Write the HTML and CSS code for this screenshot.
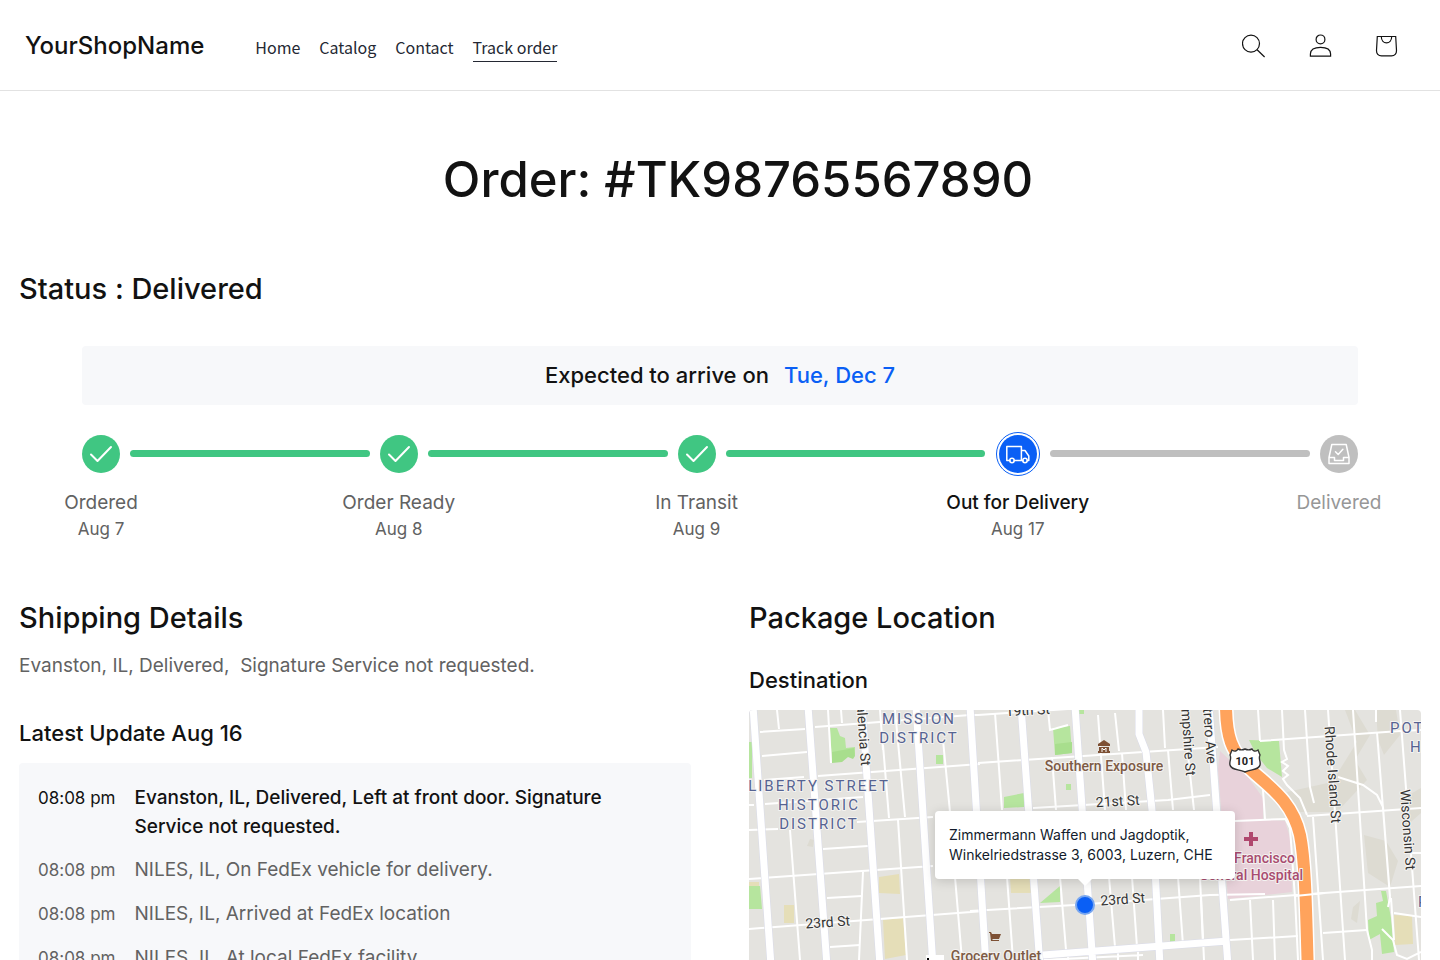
FILE: index.html
```html
<!DOCTYPE html>
<html lang="en">
<head>
<meta charset="utf-8">
<meta name="viewport" content="width=device-width, initial-scale=1">
<title>Track order</title>
<link rel="stylesheet" href="styles.css">
</head>
<body>
<header class="header">
  <a class="brand" href="#">YourShopName</a>
  <nav class="nav">
    <a class="nav-link" href="#">Home</a>
    <a class="nav-link" href="#">Catalog</a>
    <a class="nav-link" href="#">Contact</a>
    <a class="nav-link nav-current" href="#" aria-current="page">Track order</a>
  </nav>
  <div class="tools">
    <button class="tool" type="button" aria-label="Search"><svg viewBox="0 0 24 24"><circle cx="9" cy="9.600" r="8.500"/><path d="M15.100 15.700 22.600 23"/></svg></button>
    <a class="tool" href="#" aria-label="Account"><svg viewBox="0 0 24 24"><circle cx="12.500" cy="5.400" r="4.400"/><path d="M2.400 22.200v-2.200c0-4.200 3.600-6.700 10.100-6.700s10.100 2.500 10.100 6.700v2.200z"/></svg></a>
    <a class="tool" href="#" aria-label="Cart"><svg viewBox="0 0 24 24"><path d="M3.300 2.500h18.400l.8 14c.1 3.100-1.800 5.300-5 5.300h-10c-3.200 0-5.100-2.200-5-5.300zM7.300 2.500c0 8.500 10.400 8.500 10.400 0"/></svg></a>
  </div>
</header>
<main class="page">
  <h1 class="title">Order: #TK98765567890</h1>
  <h2 class="heading">Status : Delivered</h2>
  <section class="progress">
    <p class="eta"><span>Expected to arrive on</span><span class="eta-date">Tue, Dec 7</span></p>
    <ol class="steps">
      <li class="step step-short">
        <div class="node"><span class="dot"><svg viewBox="0 0 24 24"><path d="m2 12.500 6.500 6.500L22 5"/></svg></span><span class="label">Ordered</span><span class="date">Aug 7</span></div>
        <span class="line"></span>
      </li>
      <li class="step step-short">
        <div class="node"><span class="dot"><svg viewBox="0 0 24 24"><path d="m2 12.500 6.500 6.500L22 5"/></svg></span><span class="label">Order Ready</span><span class="date">Aug 8</span></div>
        <span class="line"></span>
      </li>
      <li class="step">
        <div class="node"><span class="dot"><svg viewBox="0 0 24 24"><path d="m2 12.500 6.500 6.500L22 5"/></svg></span><span class="label">In Transit</span><span class="date">Aug 9</span></div>
        <span class="line"></span>
      </li>
      <li class="step step-active" aria-current="step">
        <div class="node"><span class="dot"><svg viewBox="0 0 24 24"><path d="M3.800 18.500H.8V4.500h14.600v14H8.200M15.400 8.500h3.600l3.800 5.500v4.500h-1.400M15.400 18.500h1.600"/><circle cx="6" cy="18.500" r="2.200"/><circle cx="19" cy="18.500" r="2.200"/></svg></span><span class="label">Out for Delivery</span><span class="date">Aug 17</span></div>
        <span class="line"></span>
      </li>
      <li class="step step-last">
        <div class="node"><span class="dot"><svg viewBox="0 0 24 24"><path d="M4.800 2.500h14.400l2.800 13v6H2v-6zM2 15.500h5.500v3h9v-3H22M8.500 9.800l2.700 2.700 4.700-5.200"/></svg></span><span class="label">Delivered</span></div>
      </li>
    </ol>
  </section>
  <div class="columns">
    <section>
      <h2 class="heading">Shipping Details</h2>
      <p class="summary">Evanston, IL, Delivered,&nbsp; Signature Service not requested.</p>
      <h3 class="subheading">Latest Update Aug 16</h3>
      <ul class="log">
        <li class="entry entry-latest"><time class="time">08:08 pm</time><p class="event">Evanston, IL, Delivered, Left at front door. Signature Service not requested.</p></li>
        <li class="entry"><time class="time">08:08 pm</time><p class="event">NILES, IL, On FedEx vehicle for delivery.</p></li>
        <li class="entry"><time class="time">08:08 pm</time><p class="event">NILES, IL, Arrived at FedEx location</p></li>
        <li class="entry"><time class="time">08:08 pm</time><p class="event">NILES, IL, At local FedEx facility</p></li>
      </ul>
    </section>
    <section>
      <h2 class="heading">Package Location</h2>
      <h3 class="subheading dest-heading">Destination</h3>
      <div class="map">
        <svg class="map-art" viewBox="749 710 672 300" preserveAspectRatio="xMidYMin slice">
          <rect class="land" x="749" y="710" width="672" height="300"/>
          <g class="hill">
            <path d="M1355 710l15 25-15 25 12 20-30 32h-40l-10-20 45-10 25-40-12-32zM1376 710h20l4 25-16 20-6-15zM1364 835l22 6 12 20-8 26-22-14zM1400 800l21-12v25l-18 16zM1353 907l7-6-3 22-6-4zM807 846l3-7 4 1-1 7z"/>
          </g>
          <g class="park">
            <path d="M749 742l3 0v36h-3zM749 886h11l2 23h-13zM830 728h7l3 8 5 2 1 10 9-1v7l-2 3-5-2-6 5-10 1zM936 755h7v9h-7zM1053 728l17-2 2 27-17 2zM1066 784h5v6h-5zM1004 797l20-4v14l-20 1zM1079 710h5v4h-5zM1040 903l20-17v16zM1170 934h5v8h-5zM1249 740l30 1 3 36-15-9-11-14zM1381 891h5l2 11 3 16 3 34-12 2-2-20-11 6-1-20 9-4-1-13 7-2z"/>
            <path class="park-deep" d="M832 752l22-4 1 8-2 3-5-2-6 5-10 1zM1055 744l17-2v11l-17 2z"/>
          </g>
          <path class="lot" d="M749 882h10v4h-10zM784 905h10v18h-10zM879 877l20-3 1 20-21-1zM883 920l20-2 3 37-21 4zM1010 877h21v16h-20zM1394 915l18 1 1 28-18 1z"/>
          <path class="clinic" d="M1220 751l28 26 15 21v21l22 2 6 20 1 51-64 7-10-130z"/>
          <g class="minor">
            <path d="M760 732l45-3M815 727l155-12h8l165-11M762 756l45-4M764 780l40-3M818 776l162-12M978 763l240-16M749 805h5M765 804l98-7M749 830l29-1M857 822l76-5M1033 808l135-8 42-5M823 849l45-3M749 879l184-13M827 898l35-2M749 929l235-18M970 911l105-6 135-10 55-1M830 947l30-2M1235 821l50-2M1230 900l80-6 111-8M1230 940l68-4M1323 933l44-3M1260 741l140-10 21-1M1307 816l114-8M1394 913l27 4M1412 853h9"/>
            <path d="M777 710l2 19M828 710l3 53M841 710l1 13M883 745l6 73M895 710l10 107M898 820l9 140M943 740l7 72M790 830l10 130M863 872l-4 88M880 710l3 40M955 877l7 83M995 713l7 97M1048 710l2 20 18-5M1052 757l4 53M1098 715l7 95M1115 713l4 38M1122 753l4 57M1163 710l2 38M1168 750l5 60M1183 710l11 100M1007 877l6 83M1060 877l6 73M1109 877l6 70M1132 877l5 70M1178 877l5 68M1200 877l3 68M1043 960l100-5M1068 955v5M1118 950v10M1138 949v11"/>
            <path d="M1258 710l2 31M1282 710l2 40 3 9-5 3 6 4-5 5 5 4-5 4 4 6 13 13 7 17M1305 710l5 77 4 16M1328 710l17 250M1353 710l14 220 5 20v10M1376 710v12M1377 732l13 166-2 9M1400 710l12 157 7 93M1313 817l10 143M1338 777l25 8 14 10 6 12 2 26 5 63M1250 900l3 60M1273 900l2 60M1295 897l3 63M1263 790l2 29M1285 818l5 10 5 70M1201 895l3 65M1382 929l11 11 4 15 10 4 14-7M1391 898l3 42"/>
          </g>
          <g class="casing"><path d="M753 706l18 260M808 706l19 260M862 706l18 260M916 706l17 260M970 706l16 260M1021 706l19 260M1075 706l18 260M1139 706v28l7 18 6 58 8 156M1209 706l19 260M1043 955l185-14"/></g>
          <g class="major"><path d="M753 706l18 260M808 706l19 260M862 706l18 260M916 706l17 260M970 706l16 260M1021 706l19 260M1075 706l18 260M1139 706v28l7 18 6 58 8 156M1209 706l19 260M1043 955l185-14"/></g>
          <path class="highway-edge" d="M1226 704c0 32 5 48 24 65 18 17 42 31 50 66 6 30 6 80 9 175"/>
          <path class="highway" d="M1226 704c0 32 5 48 24 65 18 17 42 31 50 66 6 30 6 80 9 175"/>
          <path class="minor-over" d="M1295 896l30-3"/>
          <path class="shield" d="M1232 750c3 2 5 1 6-1 2 1 5 1 7 0 2 1 5 1 7 0 1 2 3 3 6 1l2 5c-2 4 1 6 0 10-1 5-8 4-15 7-7-3-14-2-15-7-1-4 2-6 0-10z"/>
          <text class="shield-num" x="1245" y="765">101</text>
          <g class="district">
            <text x="919" y="724">MISSION</text><text x="919" y="743">DISTRICT</text>
            <text x="819" y="791">LIBERTY STREET</text><text x="819" y="810">HISTORIC</text><text x="819" y="829">DISTRICT</text>
            <text class="start" x="1390" y="733">POTRERO</text><text class="start" x="1410" y="752">HILL</text><text class="start" x="1418" y="907">POTRERO</text>
          </g>
          <g class="street">
            <text transform="translate(828 927) rotate(-4)">23rd St</text>
            <text transform="translate(1118 806) rotate(-3)">21st St</text>
            <text transform="translate(1123 904) rotate(-4)">23rd St</text>
            <text transform="translate(1028 715) rotate(-3)">19th St</text>
            <text class="end" transform="translate(861 766) rotate(86)">Valencia St</text>
            <text class="end" transform="translate(1186 776) rotate(86)">Hampshire St</text>
            <text class="end" transform="translate(1207 764) rotate(86)">Potrero Ave</text>
            <text transform="translate(1328 775) rotate(86)">Rhode Island St</text>
            <text transform="translate(1403 830) rotate(86)">Wisconsin St</text>
          </g>
          <g class="place"><text x="1104" y="771">Southern Exposure</text><text x="996" y="961">Grocery Outlet</text></g>
          <g class="hospital"><text class="end" x="1295" y="863">San Francisco</text><text class="end" x="1303" y="880">General Hospital</text></g>
          <path class="cross" d="M1251 832v14M1244 839h14"/>
          <path class="poi" d="M1098 744l6-4 6 4v2h-12zM1099 747h10v4h1v2h-12v-2h1zM989 932h2l1 2h9l-2 5h-7l1 1h6v1h-8l-1-8h-1z"/>
          <path class="poi-cut" d="M1102 752v-4l2 2 2-2v4"/>
          <path class="blank" d="M926 955h18v55h-18z"/><path class="blank-mark" d="M927 958h2v3h-2z"/>
        </svg>
        <span class="pin"></span>
        <address class="bubble">Zimmermann Waffen und Jagdoptik,<br>Winkelriedstrasse 3, 6003, Luzern, CHE</address>
      </div>
    </section>
  </div>
</main>
</body>
</html>
```
FILE: styles.css
```css
* { box-sizing: border-box; }
body { margin: 0; background: #fff; color: #121212; font-family: Inter, "Liberation Sans", sans-serif; font-feature-settings: "calt" 0; }
h1, h2, h3, p, ol, ul { margin: 0; padding: 0; }
h1, h2, h3 { font-weight: 500; }
ol, ul { list-style: none; }
a { color: inherit; text-decoration: none; }

.header { display: flex; align-items: center; height: 91px; padding: 2px 32px 0 25px; border-bottom: 1px solid #e2e2e2; }
.brand { font-size: 24px; line-height: 32px; font-weight: 500; }
.nav { display: flex; gap: 19px; margin-left: 51px; padding-top: 3px; font-family: "Noto Sans CJK JP", "Noto Sans", sans-serif; font-size: 16px; color: #242833; }
.nav-link { line-height: 28px; border-bottom: 1px solid transparent; }
.nav-current { border-color: #242833; }
.tools { display: flex; gap: 22px; margin-left: auto; }
.tool { display: grid; place-items: center; width: 44px; height: 44px; padding: 0; border: 0; background: none; }
.tool svg { width: 24px; height: 24px; fill: none; stroke: #121212; stroke-width: 1.2; }

.page { padding: 53px 19px 0; }
.title { padding-left: 36px; font-size: 49px; line-height: 72px; text-align: center; }
.heading { font-size: 29px; line-height: 40px; }
.page > .heading { margin-top: 53px; }
.progress { margin: 37px 63px 0; }
.eta { display: flex; justify-content: center; gap: 15px; padding: 15px; border-radius: 4px; background: #f7f8fa; font-size: 22px; font-weight: 500; line-height: 29px; }
.eta-date { color: #0a5ff5; }

.steps { display: flex; margin-top: 25px; }
.step { display: flex; flex: 13 1 48px; gap: 10px; }
.step + .step { margin-left: 10px; }
.step-short { flex-grow: 12; }
.step-active { flex-basis: 55px; }
.step-last { flex: none; }
.node { display: flex; flex-direction: column; align-items: center; width: 38px; white-space: nowrap; color: #626262; }
.dot { display: grid; flex: none; place-items: center; width: 38px; height: 38px; margin: 5px 0 15px; border-radius: 50%; background: #40c682; }
.dot svg { width: 24px; height: 24px; fill: none; stroke: #fff; stroke-width: 2; stroke-linecap: round; stroke-linejoin: round; }
.line { flex: 1; height: 7px; margin-top: 20px; border-radius: 4px; background: #40c682; }
.label { font-size: 19px; line-height: 30px; }
.date { font-size: 17px; line-height: 23px; }
.step-active .node { width: 45px; }
.step-active .dot { outline: 1px solid #0a5ff5; outline-offset: 2px; background: #0a5ff5; }
.step-active .label { color: #121212; font-weight: 500; }
.step-active .line, .step-last .dot { background: #bfbfbf; }
.step-active svg, .step-last svg { stroke-width: 1.5; }
.step-last .label { color: #979797; }

.columns { display: grid; grid-template-columns: 1fr 1fr; gap: 58px; margin-top: 57px; }
.summary { margin-top: 12px; color: #626262; font-size: 19px; line-height: 32px; }
.subheading { margin-top: 34px; font-size: 22px; line-height: 34px; }
.dest-heading { margin-top: 25px; }
.log { display: grid; gap: 14px; margin-top: 13px; padding: 20px 19px; border-radius: 4px; background: #f7f8fa; }
.entry { display: flex; align-items: baseline; gap: 19px; color: #626262; line-height: 29px; }
.time { flex: none; font-size: 17px; }
.event { font-size: 19px; }
.entry-latest { color: #121212; }
.entry-latest .event { max-width: 500px; font-weight: 500; }

.map { position: relative; height: 300px; margin-top: 13px; overflow: hidden; border-radius: 4px; }
.map-art { display: block; width: 100%; height: 100%; font-family: Roboto, sans-serif; fill: none; }
.map-art text { text-anchor: middle; paint-order: stroke; stroke: #f4f3f1; stroke-width: 2px; stroke-linejoin: round; }
.map-art .start { text-anchor: start; }
.map-art .end { text-anchor: end; }
.land { fill: #e4e3df; }
.hill { fill: #dddbd2; }
.park { fill: #b6e59e; }
.park-deep { fill: #a8de8d; }
.lot { fill: #e5deb8; }
.clinic { fill: #e8d2da; }
.minor, .minor-over { stroke: #fff; stroke-width: 2; }
.casing { stroke: #d9dbe9; stroke-width: 8; }
.major { stroke: #fff; stroke-width: 7; }
.highway-edge { stroke: #fff; stroke-width: 15; }
.highway { stroke: #ffa35c; stroke-width: 12; }
.shield { fill: #fff; stroke: #333; stroke-width: 1.4; }
.map-art .shield-num { fill: #222; stroke: none; font-size: 11px; font-weight: 700; }
.district { fill: #566391; font-size: 15px; letter-spacing: 2px; }
.street { fill: #333; font-size: 14px; }
.place { fill: #7d5a45; font-size: 14px; font-weight: 500; }
.hospital { fill: #a94c70; font-size: 14px; font-weight: 500; }
.cross { stroke: #b0486e; stroke-width: 4; }
.poi { fill: #7d5034; }
.poi-cut { stroke: #fff; stroke-width: 1; }
.blank { fill: #fff; }
.blank-mark { fill: #000; }
.pin { position: absolute; left: 50%; top: 195px; width: 20px; height: 20px; border: 2px solid #78a6ef; border-radius: 50%; background: #0a5ff5; transform: translate(-50%, -50%); }
.bubble { position: absolute; left: 50%; top: 101px; width: 300px; padding: 14px; border-radius: 4px; background: #fff; box-shadow: 0 2px 12px rgba(0, 0, 0, .16); color: #121b2b; font-size: 14px; font-style: normal; line-height: 20px; white-space: nowrap; transform: translateX(-50%); }
.bubble::after { content: ""; position: absolute; left: 50%; top: 100%; border: 7px solid transparent; border-top-color: #fff; border-bottom: 0; transform: translateX(-50%); }
```
